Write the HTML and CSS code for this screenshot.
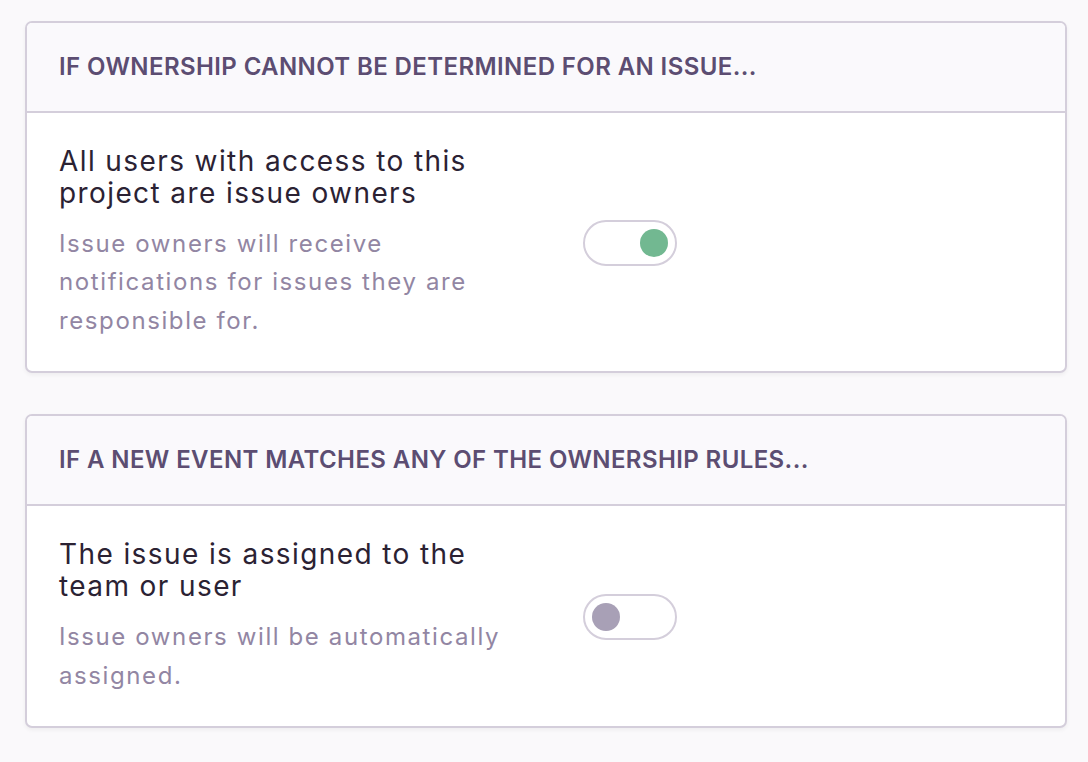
FILE: index.html
```html
<!DOCTYPE html>
<html lang="en">
<head>
<meta charset="utf-8">
<title>Issue Owners</title>
<link rel="stylesheet" href="styles.css">
</head>
<body>
<main class="page">
  <section class="panel">
    <header class="panel-header">If ownership cannot be determined for an issue...</header>
    <div class="field">
      <div class="field-label">
        <div class="field-title">All users with access to this project are issue owners</div>
        <div class="field-help">Issue owners will receive notifications for issues they are responsible for.</div>
      </div>
      <div class="field-control">
        <span class="switch switch-on"><span class="knob"></span></span>
      </div>
    </div>
  </section>
  <section class="panel">
    <header class="panel-header">If a new event matches any of the ownership rules...</header>
    <div class="field">
      <div class="field-label">
        <div class="field-title">The issue is assigned to the team or user</div>
        <div class="field-help">Issue owners will be automatically assigned.</div>
      </div>
      <div class="field-control">
        <span class="switch"><span class="knob"></span></span>
      </div>
    </div>
  </section>
</main>
</body>
</html>
```
FILE: styles.css
```css
html, body {
  margin: 0;
  padding: 0;
  background: #faf9fb;
}
body {
  font-family: Inter, "Open Sans", sans-serif;
  color: #2b1d38;
}
.page {
  padding: 21px 21px 0 25px;
}
.panel {
  background: #ffffff;
  border: 2px solid #d4cedb;
  border-radius: 7px;
  box-shadow: 0 2px 4px rgba(0, 0, 0, 0.05);
  margin-bottom: 41px;
  overflow: hidden;
}
.panel-header {
  background: #faf9fc;
  border-bottom: 2px solid #d4cedb;
  padding: 30px 32px;
  font-size: 24px;
  line-height: 28px;
  font-weight: 600;
  letter-spacing: 0.4px;
  text-transform: uppercase;
  color: #5c4d72;
}
.field {
  display: flex;
  align-items: center;
  padding: 32px 32px 31px;
}
.field-label {
  flex: 0 0 460px;
  padding-right: 32px;
}
.field-title {
  font-size: 28px;
  line-height: 32px;
  letter-spacing: 1.4px;
  color: #2b2233;
  margin-bottom: 16px;
}
.field-help {
  font-size: 24px;
  line-height: 38.4px;
  letter-spacing: 1.6px;
  color: #9286a3;
}
.field-control {
  flex: 1;
  padding-left: 32px;
}
.switch {
  display: flex;
  align-items: center;
  box-sizing: border-box;
  width: 94px;
  height: 46px;
  border: 2px solid #d4cedb;
  border-radius: 23px;
  padding: 0 7px;
  background: #ffffff;
}
.switch-on {
  justify-content: flex-end;
}
.knob {
  width: 28px;
  height: 28px;
  border-radius: 50%;
  background: #a8a0b6;
}
.switch-on .knob {
  background: #72b891;
}
```
